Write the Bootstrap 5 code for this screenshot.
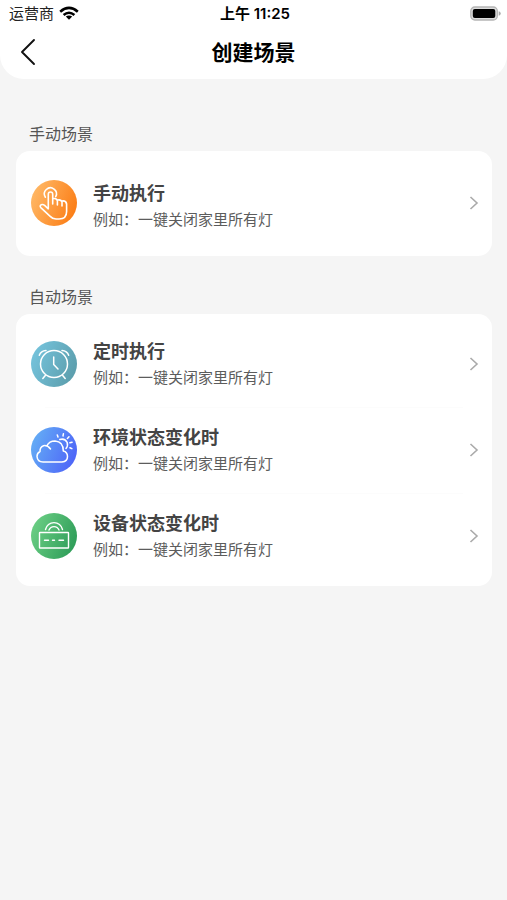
<!DOCTYPE html>
<html lang="zh-CN">
<head>
<meta charset="utf-8">
<meta name="viewport" content="width=device-width, initial-scale=1">
<title>创建场景</title>
<link href="https://cdn.jsdelivr.net/npm/bootstrap@5.3.0/dist/css/bootstrap.min.css" rel="stylesheet">
<style>
  body { background: #f5f5f5; color: #333; font-family: Inter, "Noto Sans CJK SC", sans-serif; }
  .app-top { background: #fff; color: #000; border-radius: 0 0 24px 24px; }
  .status-bar { height: 28px; padding: 0 6px 0 9px; font-size: 15px; line-height: 28px; }
  .status-side { flex: 1 1 0; }
  .carrier { color: #222; }
  .clock { font-weight: 600; }
  .title-bar { height: 51px; padding: 0 16px; }
  .title-bar h1 { font-size: 21px; line-height: 50px; font-weight: 700; }
  .back-btn { width: 24px; height: 48px; }
  .scenes { padding: 43px 15px 24px 16px; }
  .section-name { font-size: 16px; line-height: 24px; color: #555; padding-left: 13px; margin-bottom: 5px; font-weight: 400; }
  .scene-group { border-radius: 14px; padding: 7px 0; --bs-list-group-bg: #fff; background: #fff; }
  .scene-single { padding: 9px 0 10px; margin-bottom: 29px; }
  .scene-row { height: 86px; padding: 0 12px 0 15px; color: #333; background: transparent; }
  .scene-row + .scene-row::before { content: ""; position: absolute; top: 0; left: 29px; right: 29px; height: 1px; background: #fcfcfc; }
  .scene-icon { width: 46px; height: 46px; margin-right: 16px; }
  .scene-text { padding-top: 2px; }
  .scene-single .scene-text { padding-top: 8px; }
  .scene-title { font-size: 18px; line-height: 26px; font-weight: 700; color: #444; }
  .scene-note { font-size: 15px; line-height: 26px; color: #5c5c5c; }
  .line-art { fill: none; stroke: #fff; stroke-linecap: round; stroke-linejoin: round; }
</style>
</head>
<body>
<header class="app-top">
  <div class="status-bar d-flex align-items-center">
    <div class="status-side d-flex align-items-center">
      <span class="carrier">运营商</span>
      <svg class="ms-1" width="22" height="16" viewBox="0 0 22 16" aria-hidden="true">
        <g fill="none" stroke="#000" stroke-width="2.6">
          <path d="M2.200 5.700 Q11-1.900 19.800 5.700"/>
          <path d="M5.600 9 Q11 4.500 16.400 9"/>
        </g>
        <path d="M7.800 10.600 Q11 8.200 14.200 10.600 L11 13.700z"/>
      </svg>
    </div>
    <span class="clock">上午 11:25</span>
    <div class="status-side d-flex justify-content-end">
      <svg width="31" height="16" viewBox="0 0 31 16" role="img" aria-label="电量">
        <rect x=".8" y="1" width="26.500" height="13" rx="4" fill="#ddd" stroke="#b5b5b5" stroke-width="1.300"/>
        <rect x="2.800" y="3" width="22.500" height="9" rx="2" fill="#000"/>
        <path d="M28.700 5.200v4.600q2-.6 2-2.300t-2-2.300z" fill="#aaa"/>
      </svg>
    </div>
  </div>
  <div class="title-bar d-flex align-items-start justify-content-between">
    <button type="button" class="back-btn btn p-0 border-0 d-flex align-items-center" aria-label="返回">
      <svg width="24" height="28" viewBox="0 0 24 28"><path d="M18 2 L6 14 L18 26" fill="none" stroke="#111" stroke-width="1.900" stroke-linecap="round" stroke-linejoin="round"/></svg>
    </button>
    <h1 class="mb-0">创建场景</h1>
    <span class="back-btn"></span>
  </div>
</header>

<main class="scenes">
  <h2 class="section-name">手动场景</h2>
  <div class="list-group list-group-flush scene-group scene-single">
    <a href="#manual" class="scene-row list-group-item list-group-item-action border-0 d-flex align-items-center">
      <svg class="scene-icon flex-shrink-0" viewBox="0 0 46 46" aria-hidden="true">
        <defs><linearGradient id="g1" x1="0" y1=".3" x2="1" y2=".7"><stop offset="0" stop-color="#ffb866"/><stop offset="1" stop-color="#fb7c14"/></linearGradient></defs>
        <circle cx="23" cy="23" r="23" fill="url(#g1)"/>
        <g class="line-art" stroke-width="1.600">
          <path d="M17.300 28.800 V14.200 a2.200 2.200 0 0 1 4.400 0 V24 M21.700 18.800 q3.900-1 4.700 2 V25 M26.400 20 q3.800-.8 4.600 2 V26 M31 21 q4-.6 4.600 3 V31.500 q0 7.500-7.500 7.500 H25 q-3.500 0-5.800-2.600 L9.800 27.600 q-1.400-1.700.3-2.800 1.700-.9 3.500.5 l3.700 3.500"/>
          <path d="M14.400 17.200 a6 6 0 1 1 10.300-.5"/>
        </g>
      </svg>
      <span class="scene-text d-flex flex-column flex-grow-1"><span class="scene-title">手动执行</span><span class="scene-note">例如：一键关闭家里所有灯</span></span>
      <svg width="12" height="16" viewBox="0 0 12 16" aria-hidden="true"><path d="M2.500 2 L9 8 L2.500 14" fill="none" stroke="#aaa" stroke-width="1.600"/></svg>
    </a>
  </div>

  <h2 class="section-name">自动场景</h2>
  <div class="list-group list-group-flush scene-group">
    <a href="#timer" class="scene-row list-group-item list-group-item-action border-0 d-flex align-items-center">
      <svg class="scene-icon flex-shrink-0" viewBox="0 0 46 46" aria-hidden="true">
        <defs><linearGradient id="g2" x1="0" y1=".3" x2="1" y2=".7"><stop offset="0" stop-color="#75c3dc"/><stop offset="1" stop-color="#5b9dab"/></linearGradient></defs>
        <circle cx="23" cy="23" r="23" fill="url(#g2)"/>
        <g class="line-art" stroke-width="1.500">
          <circle cx="23" cy="23" r="13.500"/>
          <path d="M22.700 16 V23.500 L27 28 M14.300 34.500 L11.800 37.500 M31.700 34.500 L34.200 37.500"/>
          <path d="M8.300 14.300 Q10 9.700 15 9.500 M37.700 14.300 Q36 9.700 31 9.500"/>
        </g>
      </svg>
      <span class="scene-text d-flex flex-column flex-grow-1"><span class="scene-title">定时执行</span><span class="scene-note">例如：一键关闭家里所有灯</span></span>
      <svg width="12" height="16" viewBox="0 0 12 16" aria-hidden="true"><path d="M2.500 2 L9 8 L2.500 14" fill="none" stroke="#aaa" stroke-width="1.600"/></svg>
    </a>
    <a href="#environment" class="scene-row list-group-item list-group-item-action border-0 d-flex align-items-center">
      <svg class="scene-icon flex-shrink-0" viewBox="0 0 46 46" aria-hidden="true">
        <defs><linearGradient id="g3" x1="0" y1=".3" x2="1" y2=".7"><stop offset="0" stop-color="#64adf5"/><stop offset="1" stop-color="#4d63f8"/></linearGradient></defs>
        <circle cx="23" cy="23" r="23" fill="url(#g3)"/>
        <g class="line-art" stroke-width="1.500">
          <path d="M19.500 22 Q16.500 18 12.500 18.700 Q8.800 20 9 24.500 Q6 26 6 29.500 Q6.500 35 12 35 H31 Q36.500 34.500 36.500 29.500 Q36.500 25 32.300 24 Q32.300 14.500 24 14 Q18.300 14 15.800 18.800"/>
          <path d="M28.800 12.500 Q34 11 36.200 15.500 Q37.200 19 35 21.500"/>
          <path d="M27 10 l-.7-2 M32 9 l.4-2.200 M36.400 11.500 l1.600-1.700 M38.900 15.800 l2.200-.6 M38.900 20.700 l2 .9"/>
        </g>
      </svg>
      <span class="scene-text d-flex flex-column flex-grow-1"><span class="scene-title">环境状态变化时</span><span class="scene-note">例如：一键关闭家里所有灯</span></span>
      <svg width="12" height="16" viewBox="0 0 12 16" aria-hidden="true"><path d="M2.500 2 L9 8 L2.500 14" fill="none" stroke="#aaa" stroke-width="1.600"/></svg>
    </a>
    <a href="#device" class="scene-row list-group-item list-group-item-action border-0 d-flex align-items-center">
      <svg class="scene-icon flex-shrink-0" viewBox="0 0 46 46" aria-hidden="true">
        <defs><linearGradient id="g4" x1="0" y1=".3" x2="1" y2=".7"><stop offset="0" stop-color="#6bce84"/><stop offset="1" stop-color="#2d9c58"/></linearGradient></defs>
        <circle cx="23" cy="23" r="23" fill="url(#g4)"/>
        <g class="line-art" stroke-width="1.400">
          <rect x="8.500" y="19.500" width="29" height="15.500" rx=".5"/>
          <path d="M13.500 27.200 h4 M21.500 27.200 h2 M28 27.200 h4.500"/>
          <path d="M14.500 16.500 a8.700 8.700 0 0 1 17 0 M18 17 a5.400 5.400 0 0 1 10 0"/>
        </g>
      </svg>
      <span class="scene-text d-flex flex-column flex-grow-1"><span class="scene-title">设备状态变化时</span><span class="scene-note">例如：一键关闭家里所有灯</span></span>
      <svg width="12" height="16" viewBox="0 0 12 16" aria-hidden="true"><path d="M2.500 2 L9 8 L2.500 14" fill="none" stroke="#aaa" stroke-width="1.600"/></svg>
    </a>
  </div>
</main>
<script src="https://cdn.jsdelivr.net/npm/bootstrap@5.3.0/dist/js/bootstrap.bundle.min.js"></script>
</body>
</html>
